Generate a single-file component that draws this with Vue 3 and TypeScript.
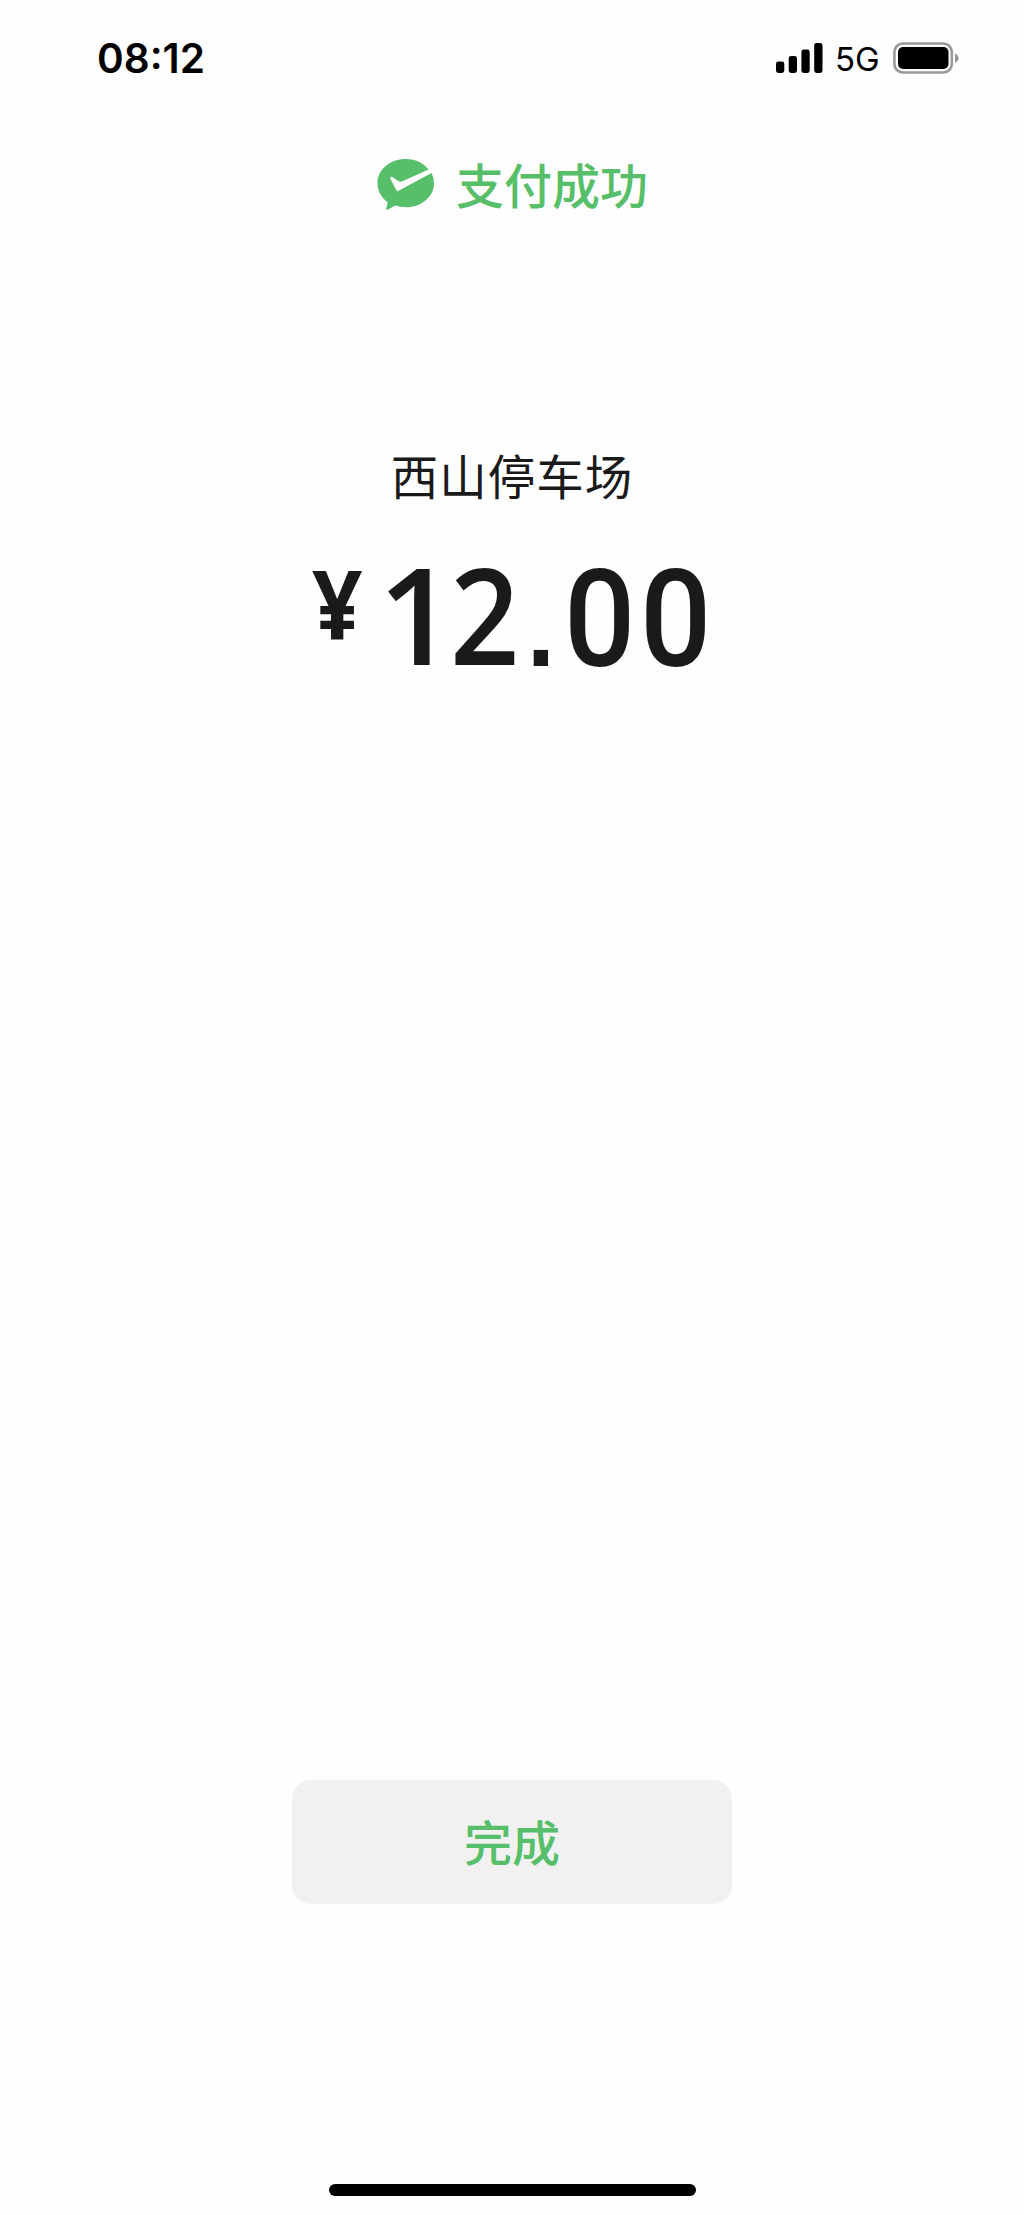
<script setup lang="ts">
interface Glyph { char: string; kind: string }

const time = '08:12'
const network = '5G'
const status = '支付成功'
const merchant = '西山停车场'
const amount: Glyph[] = [
  { char: '1', kind: 'one' },
  { char: '2', kind: 'two' },
  { char: '.', kind: 'dot' },
  { char: '0', kind: 'zero' },
  { char: '0', kind: 'zero' },
]
</script>

<template>
  <main class="screen">
    <header class="status-bar">
      <span class="time">{{ time }}</span>
      <div class="indicators">
        <svg class="signal" width="48" height="32" viewBox="0 0 48 32">
          <rect x="0" y="19.5" width="8.3" height="11.5" rx="2.4" />
          <rect x="12.7" y="14" width="8.3" height="17" rx="2.4" />
          <rect x="25.4" y="7.5" width="8.3" height="23.5" rx="2.4" />
          <rect x="38.2" y="1" width="8.3" height="30" rx="2.4" />
        </svg>
        <span class="network">{{ network }}</span>
        <svg class="battery" width="67" height="32" viewBox="0 0 67 32">
          <rect x="1.4" y="1.5" width="57.4" height="29" rx="8.500" fill="none" stroke="#999" stroke-width="2.600" />
          <rect x="5" y="5" width="50.5" height="22" rx="5" />
          <path d="M62 11.5Q65.5 13 65.5 16T62 20.500Z" fill="#969696" />
        </svg>
      </div>
    </header>

    <section class="result">
      <svg class="logo" width="58" height="52" viewBox="0 0 58 52">
        <path fill="#57bf6a" d="M29 0C13 0 .5 10.600.5 24.200C.5 32 4.500 38.700 10.800 43.200L9.200 49.500Q9 51.500 11 50.600L18.500 46.500Q23.500 48.200 29 48.200C44.500 48.200 57 37.600 57 24.200Q57 18.700 54.500 14L22 31.600Q20.200 33 19.200 30.800L13.400 19.800Q12.800 17 15.500 18.100L21.500 22.300Q23 23.200 24.800 22.400L51.500 10.500C46.500 4 38.500 0 29 0Z" />
      </svg>
      <span class="result-text">{{ status }}</span>
    </section>

    <section class="payment">
      <h1 class="merchant">{{ merchant }}</h1>
      <div class="amount">
        <span class="currency">¥</span>
        <span v-for="(g, i) in amount" :key="i" class="glyph" :class="g.kind">{{ g.char }}</span>
      </div>
    </section>

    <button class="done" type="button">完成</button>
    <div class="home-indicator"></div>
  </main>
</template>

<style>
body {
  margin: 0;
  background: #fefefe;
}
</style>

<style scoped>
.screen {
  box-sizing: border-box;
  width: 1024px;
  height: 2215px;
  padding-bottom: 19px;
  display: flex;
  flex-direction: column;
  align-items: center;
  background: #fefefe;
  color: #1a1a1a;
  font-family: "Noto Sans CJK SC", sans-serif;
}
.status-bar {
  box-sizing: border-box;
  width: 100%;
  height: 116px;
  padding: 0 64px 0 97px;
  display: flex;
  align-items: center;
  justify-content: space-between;
  color: #000;
  font-family: Inter, sans-serif;
}
.time {
  font-size: 40.500px;
  font-weight: 600;
}
.indicators {
  display: flex;
  align-items: center;
}
.network {
  width: 47px;
  margin: 0 11px;
  font-size: 33px;
  line-height: 32px;
  padding-top: 2px;
}
.result {
  height: 136px;
  display: flex;
  align-items: center;
}
.logo {
  margin: 2px 21px 0 1px;
}
.result-text {
  padding-bottom: 3px;
  color: #57bf6a;
  font-size: 48px;
  font-weight: 500;
}
.payment {
  margin-top: 188px;
  display: flex;
  flex-direction: column;
  align-items: center;
}
.merchant {
  margin: 0;
  height: 70px;
  line-height: 70px;
  font-size: 47.500px;
  font-weight: 400;
  letter-spacing: 1px;
}
.amount {
  margin-top: 28px;
  height: 160px;
  display: flex;
  align-items: flex-start;
  font-size: 135px;
}
.currency {
  width: 66.500px;
  font-family: "Noto Sans", sans-serif;
  font-size: 95px;
  font-weight: 700;
  line-height: 129px;
  transform: scaleX(0.93);
  transform-origin: left;
}
.glyph {
  font-family: "Open Sans", sans-serif;
  font-weight: 600;
  line-height: 151px;
  transform: scaleX(0.9);
  transform-origin: left;
}
.one {
  width: 71.500px;
  transform: none;
}
.two {
  width: 70.500px;
}
.dot {
  width: 43.500px;
  font-family: "Liberation Sans", sans-serif;
  font-size: 150px;
  font-weight: 400;
  line-height: 152px;
  transform: none;
}
.zero {
  width: 76px;
  font-family: Roboto, sans-serif;
  font-weight: 500;
  line-height: 164px;
  transform: scaleX(0.93);
}
.zero:last-child {
  width: 73px;
}
.done {
  width: 440px;
  height: 124px;
  margin-top: auto;
  padding: 0 0 4px;
  border: 0;
  border-radius: 19px;
  background: #f1f1f1;
  color: #57bf6a;
  font: 500 48px "Noto Sans CJK SC", sans-serif;
}
.home-indicator {
  width: 367px;
  height: 12px;
  margin-top: 280px;
  border-radius: 6px;
  background: #000;
}
</style>
